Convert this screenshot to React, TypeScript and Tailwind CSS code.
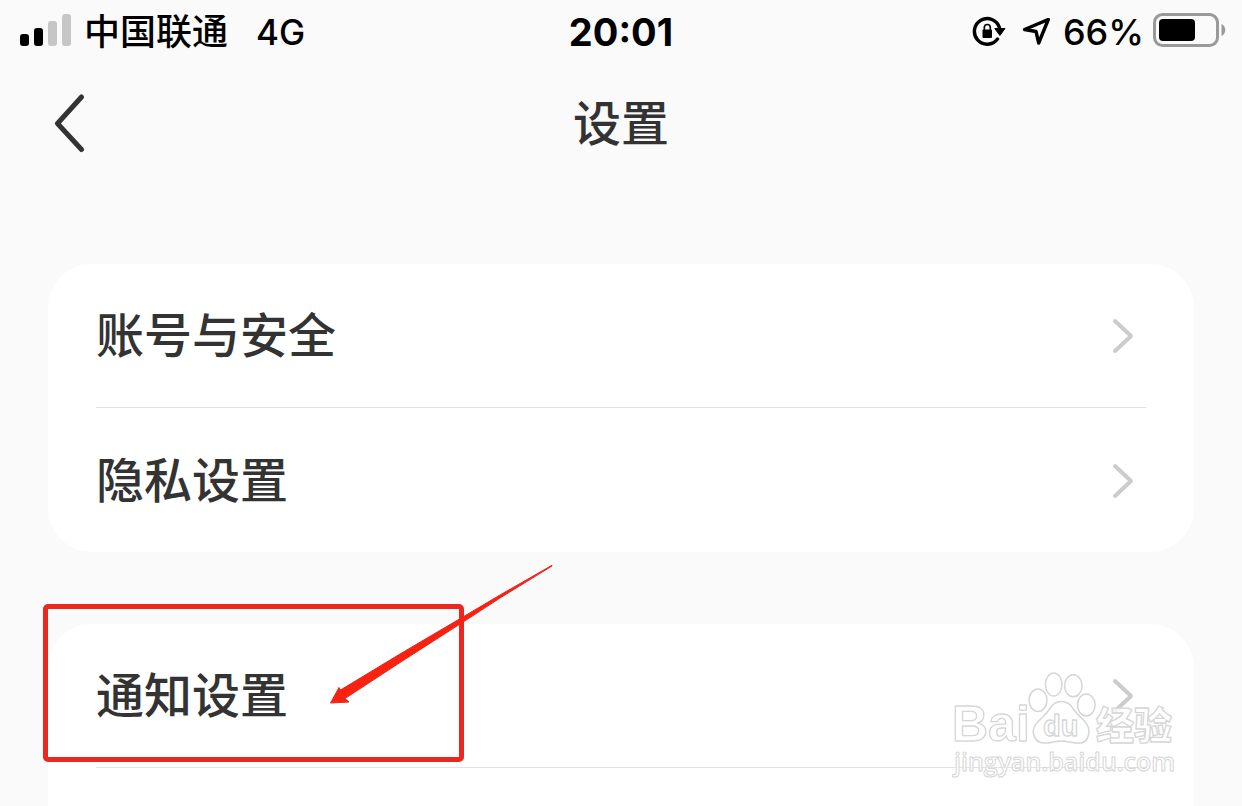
import React from "react";

const SANS = "font-['Inter','Noto_Sans_CJK_SC',sans-serif]";

function SignalIcon() {
  return (
    <svg width="52" height="36" viewBox="0 0 52 36" aria-hidden="true">
      <rect x="0" y="20" width="9" height="12" rx="3" fill="#000" />
      <rect x="14" y="14" width="9" height="18" rx="3" fill="#000" />
      <rect x="28" y="7" width="9" height="25" rx="3" fill="#c6c6c6" />
      <rect x="42" y="0" width="9" height="32" rx="3" fill="#c6c6c6" />
    </svg>
  );
}

function RotationLockIcon() {
  return (
    <svg width="34" height="34" viewBox="0 0 34 34" aria-hidden="true">
      <path
        d="M25.5 24A12.800 12.800 0 1 1 27.400 12.500"
        fill="none"
        stroke="#000"
        strokeWidth="3.4"
        strokeLinecap="round"
      />
      <path d="M22.800 13.500h10.200l-5.100 7z" fill="#000" stroke="#000" strokeLinejoin="round" />
      <rect x="10.500" y="14.500" width="9.500" height="8.500" rx="1" fill="#000" />
      <path d="M12.300 15v-2.500a3 3 0 0 1 6 0v2.500" fill="none" stroke="#000" strokeWidth="1.6" />
    </svg>
  );
}

function LocationIcon() {
  return (
    <svg width="29" height="29" viewBox="0 0 29 29" aria-hidden="true">
      <path
        d="M26.300 1.500 2.600 11.500 14 13.500 16.700 25z"
        fill="none"
        stroke="#000"
        strokeWidth="3.4"
        strokeLinejoin="round"
      />
    </svg>
  );
}

function BatteryIcon() {
  return (
    <svg width="74" height="38" viewBox="0 0 74 38" aria-hidden="true">
      <rect x="2.500" y="1.500" width="63" height="31" rx="8" fill="none" stroke="#999" strokeWidth="3" />
      <rect x="7" y="6" width="36" height="22" rx="4" fill="#000" />
      <path d="M69.500 11c5 2 5 10 0 12z" fill="#999" />
    </svg>
  );
}

function StatusBar() {
  return (
    <div className="grid h-16 grid-cols-[1fr_auto_1fr] items-center px-4 text-black">
      <div className="flex items-center gap-3 pl-1 font-medium">
        <SignalIcon />
        <span className="text-[36px] leading-10">中国联通</span>
        <span className="ml-4 text-[35px] leading-10">4G</span>
      </div>
      <time className="text-[38px] font-bold leading-10">20:01</time>
      <div className="flex items-center justify-end gap-2">
        <RotationLockIcon />
        <span className="ml-2 mr-1">
          <LocationIcon />
        </span>
        <span className="text-[36px] font-medium leading-10">66%</span>
        <BatteryIcon />
      </div>
    </div>
  );
}

function Header() {
  return (
    <header className="grid h-30 grid-cols-[1fr_auto_1fr] items-center px-12">
      <button type="button" aria-label="返回" className="w-10 pl-1">
        <svg width="36" height="60" viewBox="0 0 36 60" aria-hidden="true">
          <path
            d="M29.500 3 5.500 29.500 29.500 55.500"
            fill="none"
            stroke="#333"
            strokeWidth="5"
            strokeLinecap="round"
            strokeLinejoin="round"
          />
        </svg>
      </button>
      <h1 className="text-[48px] font-medium leading-14">设置</h1>
    </header>
  );
}

function SettingRow({ label, divider = false }: { label: string; divider?: boolean }) {
  return (
    <li className="px-12">
      <a
        href="#"
        className={
          divider
            ? "flex h-36 items-center justify-between border-b border-[#e2e2e2] pr-3 pt-px"
            : "flex h-36 items-center justify-between pr-3 pt-px"
        }
      >
        <span className="text-[48px] font-medium leading-14">{label}</span>
        <svg width="22" height="36" viewBox="0 0 22 36" aria-hidden="true">
          <path
            d="M3 3 19 18 3 33"
            fill="none"
            stroke="#ccc"
            strokeWidth="4"
            strokeLinecap="round"
            strokeLinejoin="round"
          />
        </svg>
      </a>
    </li>
  );
}

function Callout() {
  return (
    <div className="pointer-events-none absolute -left-[5px] -top-5 h-[158px] w-[421px] rounded-[5px] border-5 border-[#eb281f]">
      <svg
        className="absolute left-[281px] -top-[45px]"
        width="230"
        height="144"
        viewBox="0 0 230 144"
        aria-hidden="true"
      >
        <path
          d="M223 1.300 171 31 130 55.300 71 90 11.500 126 10 123.500 1.500 139 20 138 16 134.500 71 98.500 131 60 171 34 223 2z"
          fill="#f9210f"
          stroke="#f0241a"
          strokeWidth="1"
          strokeLinejoin="round"
        />
      </svg>
    </div>
  );
}

function Watermark() {
  return (
    <svg
      className="pointer-events-none absolute right-4 top-11"
      width="230"
      height="112"
      viewBox="0 0 230 112"
      role="img"
      aria-label="Baidu 经验"
    >
      <g fill="#fff" fillOpacity="0.8" stroke="#d6d6d6" strokeWidth="1.500">
        <ellipse cx="90" cy="32.300" rx="9" ry="11.300" />
        <ellipse cx="105.700" cy="16.500" rx="8.300" ry="11.500" />
        <ellipse cx="125.300" cy="17.700" rx="8.800" ry="11" />
        <ellipse cx="138.300" cy="37" rx="8.800" ry="11" />
        <path d="M113.500 33.500c-5 0-9 2.500-12 7.500-3.500 6-7 8-11 12-4 4-6 8-5 13 1.500 7 7 9.500 13 9 6-.5 10-2 15-2s10 2 16 2.300c6 .3 10-3.300 11.300-9.300 1.200-6-1.300-10-5.300-14-4-4-7.500-6.500-10.500-11.500s-6.500-7-11.500-7z" />
      </g>
      <g fill="#fff" fillOpacity="0.8" stroke="#d6d6d6" strokeWidth="1.300" strokeLinejoin="round">
        <text x="4" y="73" fontSize="50" fontWeight="700" fontFamily="Liberation Sans, sans-serif">
          Bai
        </text>
        <text x="95" y="68" fontSize="29" fontWeight="700" fontFamily="Liberation Sans, sans-serif">
          du
        </text>
        <text x="148" y="71" fontSize="38" fontWeight="900" fontFamily="Noto Sans CJK SC, sans-serif">
          经验
        </text>
        <text
          x="6"
          y="103"
          fontSize="25"
          fontWeight="600"
          fontFamily="Open Sans, sans-serif"
          strokeWidth="1"
        >
          jingyan.baidu.com
        </text>
      </g>
    </svg>
  );
}

export default function App() {
  return (
    <div className={`flex min-h-screen flex-col bg-[#fafafa] text-[#333] ${SANS}`}>
      <StatusBar />
      <Header />
      <main className="flex grow flex-col gap-18 px-12 pt-20">
        <ul className="rounded-[44px] bg-white">
          <SettingRow label="账号与安全" divider />
          <SettingRow label="隐私设置" />
        </ul>
        <div className="relative grow rounded-t-[44px] bg-white">
          <ul>
            <SettingRow label="通知设置" divider />
          </ul>
          <Watermark />
          <Callout />
        </div>
      </main>
    </div>
  );
}
